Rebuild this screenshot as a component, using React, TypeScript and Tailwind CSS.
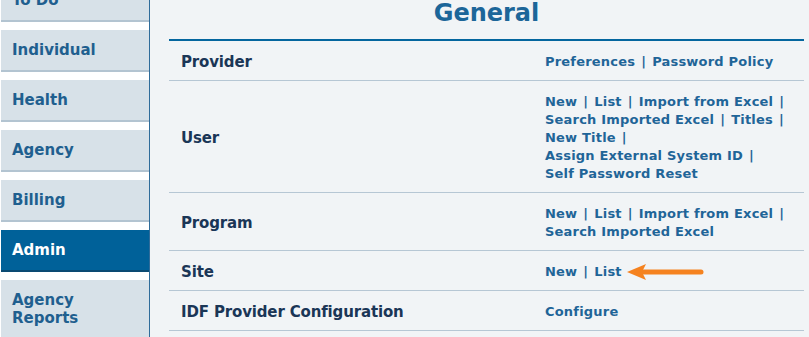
const sideItems = [
  { label: "To Do" },
  { label: "Individual" },
  { label: "Health" },
  { label: "Agency" },
  { label: "Billing" },
  { label: "Admin", active: true },
];

const Sep = () => <span className="mx-[6px]">|</span>;

const Links = ({ lines }: { lines: string[][] }) => (
  <div>
    {lines.map((line, i) => (
      <div key={i}>
        {line.map((l, j) => (
          <span key={j}>
            {l === "|" ? <Sep /> : <a className="cursor-pointer">{l}</a>}
          </span>
        ))}
      </div>
    ))}
  </div>
);

const Arrow = () => (
  <svg width="78" height="18" viewBox="0 0 78 18" className="ml-[5px] inline-block">
    <polygon points="0,9 19,1 15,9 19,17" fill="#f5821f" />
    <line x1="15" y1="9" x2="74" y2="9" stroke="#f5821f" strokeWidth="5" strokeLinecap="round" />
  </svg>
);

const rows = [
  { label: "Provider", lines: [["Preferences", "|", "Password Policy"]] },
  {
    label: "User",
    lines: [
      ["New", "|", "List", "|", "Import from Excel", "|"],
      ["Search Imported Excel", "|", "Titles", "|"],
      ["New Title", "|"],
      ["Assign External System ID", "|"],
      ["Self Password Reset"],
    ],
  },
  {
    label: "Program",
    lines: [
      ["New", "|", "List", "|", "Import from Excel", "|"],
      ["Search Imported Excel"],
    ],
  },
  { label: "Site", lines: [["New", "|", "List"]], arrow: true },
  { label: "IDF Provider Configuration", lines: [["Configure"]] },
];

export default function App() {
  return (
    <div
      className="flex h-[337px] w-[809px] overflow-hidden bg-white font-bold"
      style={{ fontFamily: '"DejaVu Sans", Verdana, sans-serif' }}
    >
      {/* sidebar */}
      <div className="flex w-[150px] shrink-0 flex-col border-r border-[#2f6c9a] bg-white pl-px">
        <div className="-mt-[20px]">
          {sideItems.map((item) => (
            <div
              key={item.label}
              className={
                item.active
                  ? "mb-[8px] flex h-[42px] items-center border-b-2 border-[#0a4a72] bg-[#006199] pl-[11px] text-[15px] text-white"
                  : "mb-[8px] flex h-[42px] items-center border-b-2 border-[#b3c4d1] bg-[#d7e1e8] pl-[11px] text-[15px] text-[#1f5f8f]"
              }
            >
              {item.label}
            </div>
          ))}
          <div className="h-[60px] bg-[#d7e1e8] pl-[11px] pt-[11px] text-[15px] leading-[18px] text-[#1f5f8f]">
            Agency
            <br />
            Reports
          </div>
        </div>
      </div>

      {/* main */}
      <div className="flex-1 bg-[#f1f4f6] pl-[19px] pr-[5px]">
        <div className="h-[39px] text-center text-[24px] leading-[26px] text-[#1c6699]">General</div>
        <div className="border-t-2 border-[#04669e]">
          {rows.map((row) => (
            <div key={row.label} className="flex border-b border-[#b6c7d4]">
              <div className="flex w-[376px] shrink-0 items-center pl-[12px] pt-[4px] text-[15px] tracking-[-0.15px] text-[#1a3656]">
                {row.label}
              </div>
              <div className="flex items-center pb-[9px] pt-[12px] text-[13px] leading-[18px] tracking-[0.2px] text-[#1f6598]">
                <Links lines={row.lines} />
                {row.arrow && <Arrow />}
              </div>
            </div>
          ))}
        </div>
      </div>
    </div>
  );
}
